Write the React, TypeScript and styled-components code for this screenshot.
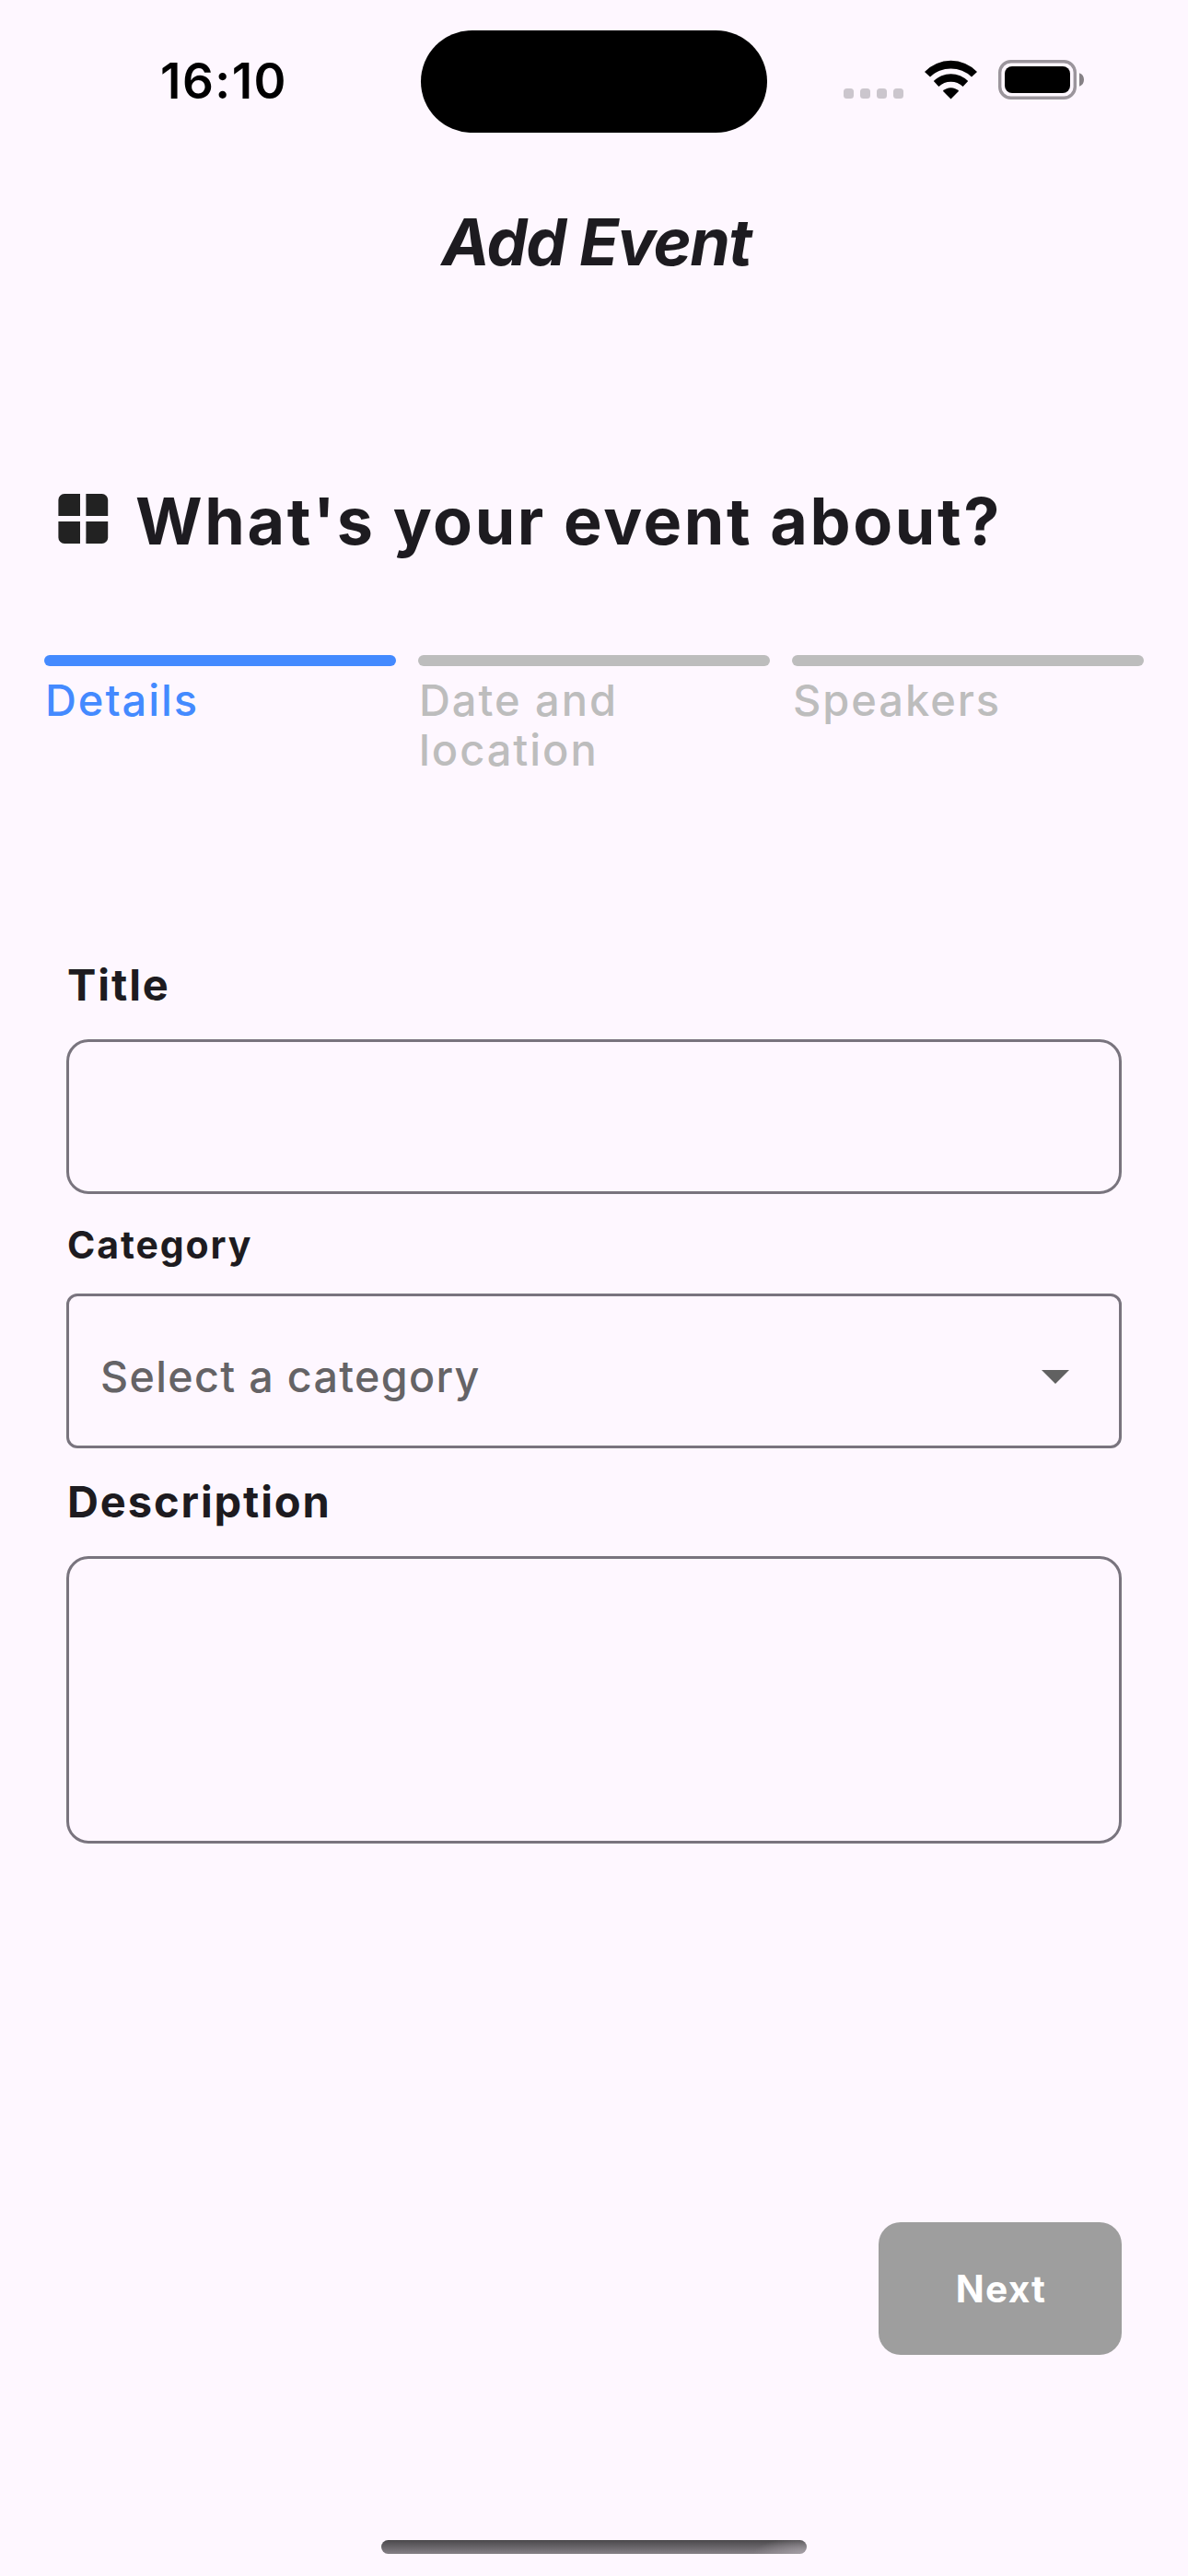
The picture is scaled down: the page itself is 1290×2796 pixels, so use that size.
import React from "react";
import styled, { createGlobalStyle } from "styled-components";

const GlobalStyle = createGlobalStyle`
  *, *::before, *::after { box-sizing: border-box; }
  html, body { margin: 0; padding: 0; background: #fef7ff; }
  body { font-family: Inter, Roboto, "Liberation Sans", sans-serif; color: #1d1b20; }
`;

const Screen = styled.main`
  display: flex;
  flex-direction: column;
  width: 1290px;
  height: 2796px;
  background: #fef7ff;
  overflow: hidden;
`;

const StatusBar = styled.header`
  display: grid;
  grid-template-columns: 457px 376px 1fr;
  height: 177px;
  padding-top: 33px;
  color: #000;
`;

const Clock = styled.time`
  padding-left: 174px;
  font-size: 53px;
  font-weight: 600;
  line-height: 111px;
  letter-spacing: 1.5px;
`;

const Island = styled.div`
  height: 111px;
  border-radius: 56px;
  background: #000;
`;

const StatusIcons = styled.div`
  display: flex;
  align-items: flex-end;
  gap: 23px;
  height: 43px;
  margin-top: 32px;
  padding-left: 83px;
`;

const SignalDots = styled.div`
  display: flex;
  gap: 7px;
  margin-bottom: 1px;
`;

const SignalDot = styled.span`
  width: 11px;
  height: 11px;
  border-radius: 3.5px;
  background: #cbc6cd;
`;

const AppBar = styled.div`
  display: flex;
  align-items: center;
  justify-content: center;
  height: 168px;
  padding: 3px 0 0 5px;
`;

const AppBarTitle = styled.h1`
  margin: 0;
  font-size: 70px;
  font-weight: 700;
  font-style: italic;
  line-height: 84px;
  letter-spacing: -1.5px;
`;

const Heading = styled.div`
  display: flex;
  align-items: center;
  gap: 29px;
  margin-top: 179px;
  padding-left: 63px;
`;

const HeadingIcon = styled.svg`
  flex: none;
  margin-bottom: 6px;
`;

const HeadingText = styled.h2`
  margin: 0;
  font-size: 70px;
  font-weight: 700;
  line-height: 84px;
  letter-spacing: 2.6px;
  white-space: nowrap;
`;

const Steps = styled.ol`
  display: grid;
  grid-template-columns: repeat(3, 1fr);
  gap: 24px;
  height: 130px;
  margin: 103px 0 0;
  padding: 0 48px;
  list-style: none;
`;

const Step = styled.li<{ $active?: boolean }>`
  color: ${(p) => (p.$active ? "#448aff" : "#bdbdbd")};
`;

const StepBar = styled.div`
  height: 12px;
  border-radius: 6px;
  background: currentColor;
`;

const StepLabel = styled.div`
  max-width: 300px;
  margin-top: 10px;
  padding-left: 1px;
  font-size: 47px;
  font-weight: 500;
  line-height: 54px;
  letter-spacing: 1.95px;
`;

const Form = styled.form`
  display: flex;
  flex-direction: column;
  margin-top: 200px;
  padding: 0 72px;
`;

const Label = styled.label<{ $small?: boolean }>`
  padding-left: 1px;
  font-size: ${(p) => (p.$small ? "41px" : "47px")};
  font-weight: 700;
  line-height: ${(p) => (p.$small ? "52px" : "56px")};
  margin: ${(p) => (p.$small ? "0 0 27px" : "0 0 31px")};
  letter-spacing: 1.9px;

  div + & { margin-top: 30px; }
  input + & { margin-top: 29px; }
`;

const TextField = styled.input`
  height: 168px;
  padding: 0 36px;
  border: 3px solid #79747e;
  border-radius: 24px;
  background: transparent;
  font: inherit;
  outline: none;
`;

const TextArea = styled.textarea`
  height: 312px;
  padding: 36px;
  border: 3px solid #79747e;
  border-radius: 24px;
  background: transparent;
  font: inherit;
  outline: none;
  resize: none;
`;

const Select = styled.div`
  display: flex;
  align-items: center;
  justify-content: space-between;
  height: 168px;
  padding: 12px 54px 0 34px;
  border: 3px solid #79747e;
  border-radius: 12px;
  color: #656366;
  font-size: 46.6px;
  font-weight: 450;
  line-height: 60px;
  letter-spacing: 1.35px;
`;

const NextButton = styled.button`
  align-self: flex-end;
  width: 264px;
  height: 144px;
  margin-top: 411px;
  padding: 2px 0 0 2px;
  border: 0;
  border-radius: 24px;
  background: #9e9e9e;
  color: #fff;
  font-family: inherit;
  font-size: 40.7px;
  font-weight: 700;
  line-height: 50px;
  letter-spacing: 1.2px;
`;

const HomeIndicator = styled.div`
  flex: none;
  align-self: center;
  width: 462px;
  height: 15px;
  margin-top: 201px;
  border-radius: 8px;
  background:
    radial-gradient(ellipse 58px 18px at 100% 100%, rgba(170, 164, 171, 0.9), rgba(170, 164, 171, 0)),
    linear-gradient(#4a484b, #858086);
`;

function WifiIcon() {
  return (
    <svg width="57" height="43" viewBox="0 0 57 43" fill="#000">
      <path d="M0 12.9A39.5 39.5 0 0 1 57 12.9L51 18.5A32.5 32.5 0 0 0 6 18.5Z" />
      <path d="M9.8 23.1A26 26 0 0 1 47.2 23.1L41.6 28.9A19 19 0 0 0 15.4 28.9Z" />
      <path d="M19.8 33.7A12.5 12.5 0 0 1 37.2 33.7L28.5 42.5Z" />
    </svg>
  );
}

function BatteryIcon() {
  return (
    <svg width="94" height="43" viewBox="0 0 94 43">
      <rect x="1.7" y="1.7" width="81.6" height="39.6" rx="12" fill="none" stroke="#9b959c" strokeWidth="3.4" />
      <rect x="7" y="7" width="71" height="29" rx="8" fill="#000" />
      <path d="M88 14.2C91.5 15.4 93 18.2 93 21.5S91.5 27.6 88 28.8Z" fill="#868186" />
    </svg>
  );
}

function GridIcon() {
  return (
    <HeadingIcon width="55" height="54" viewBox="0 0 55 54" fill="#222">
      <path d="M24 0V24H.4V6.5A6.5 6.5 0 0 1 6.9 0Z" />
      <path d="M30.4 0H47.7A6.5 6.5 0 0 1 54.2 6.5V24H30.4Z" />
      <path d="M.4 30H24V54H6.9A6.5 6.5 0 0 1 .4 47.5Z" />
      <path d="M30.4 30H54.2V47.5A6.5 6.5 0 0 1 47.7 54H30.4Z" />
    </HeadingIcon>
  );
}

const STEPS = ["Details", "Date and location", "Speakers"];

export default function App() {
  return (
    <Screen>
      <GlobalStyle />
      <StatusBar>
        <Clock>16:10</Clock>
        <Island />
        <StatusIcons>
          <SignalDots>
            <SignalDot />
            <SignalDot />
            <SignalDot />
            <SignalDot />
          </SignalDots>
          <WifiIcon />
          <BatteryIcon />
        </StatusIcons>
      </StatusBar>

      <AppBar>
        <AppBarTitle>Add Event</AppBarTitle>
      </AppBar>

      <Heading>
        <GridIcon />
        <HeadingText>What's your event about?</HeadingText>
      </Heading>

      <Steps>
        {STEPS.map((name, i) => (
          <Step key={name} $active={i === 0}>
            <StepBar />
            <StepLabel>{name}</StepLabel>
          </Step>
        ))}
      </Steps>

      <Form>
        <Label htmlFor="title">Title</Label>
        <TextField id="title" />
        <Label $small>Category</Label>
        <Select>
          Select a category
          <svg width="30" height="15" viewBox="0 0 30 15" fill="#616161">
            <path d="M0 0H30L15 15Z" />
          </svg>
        </Select>
        <Label htmlFor="description">Description</Label>
        <TextArea id="description" />
        <NextButton type="button">Next</NextButton>
      </Form>

      <HomeIndicator />
    </Screen>
  );
}
